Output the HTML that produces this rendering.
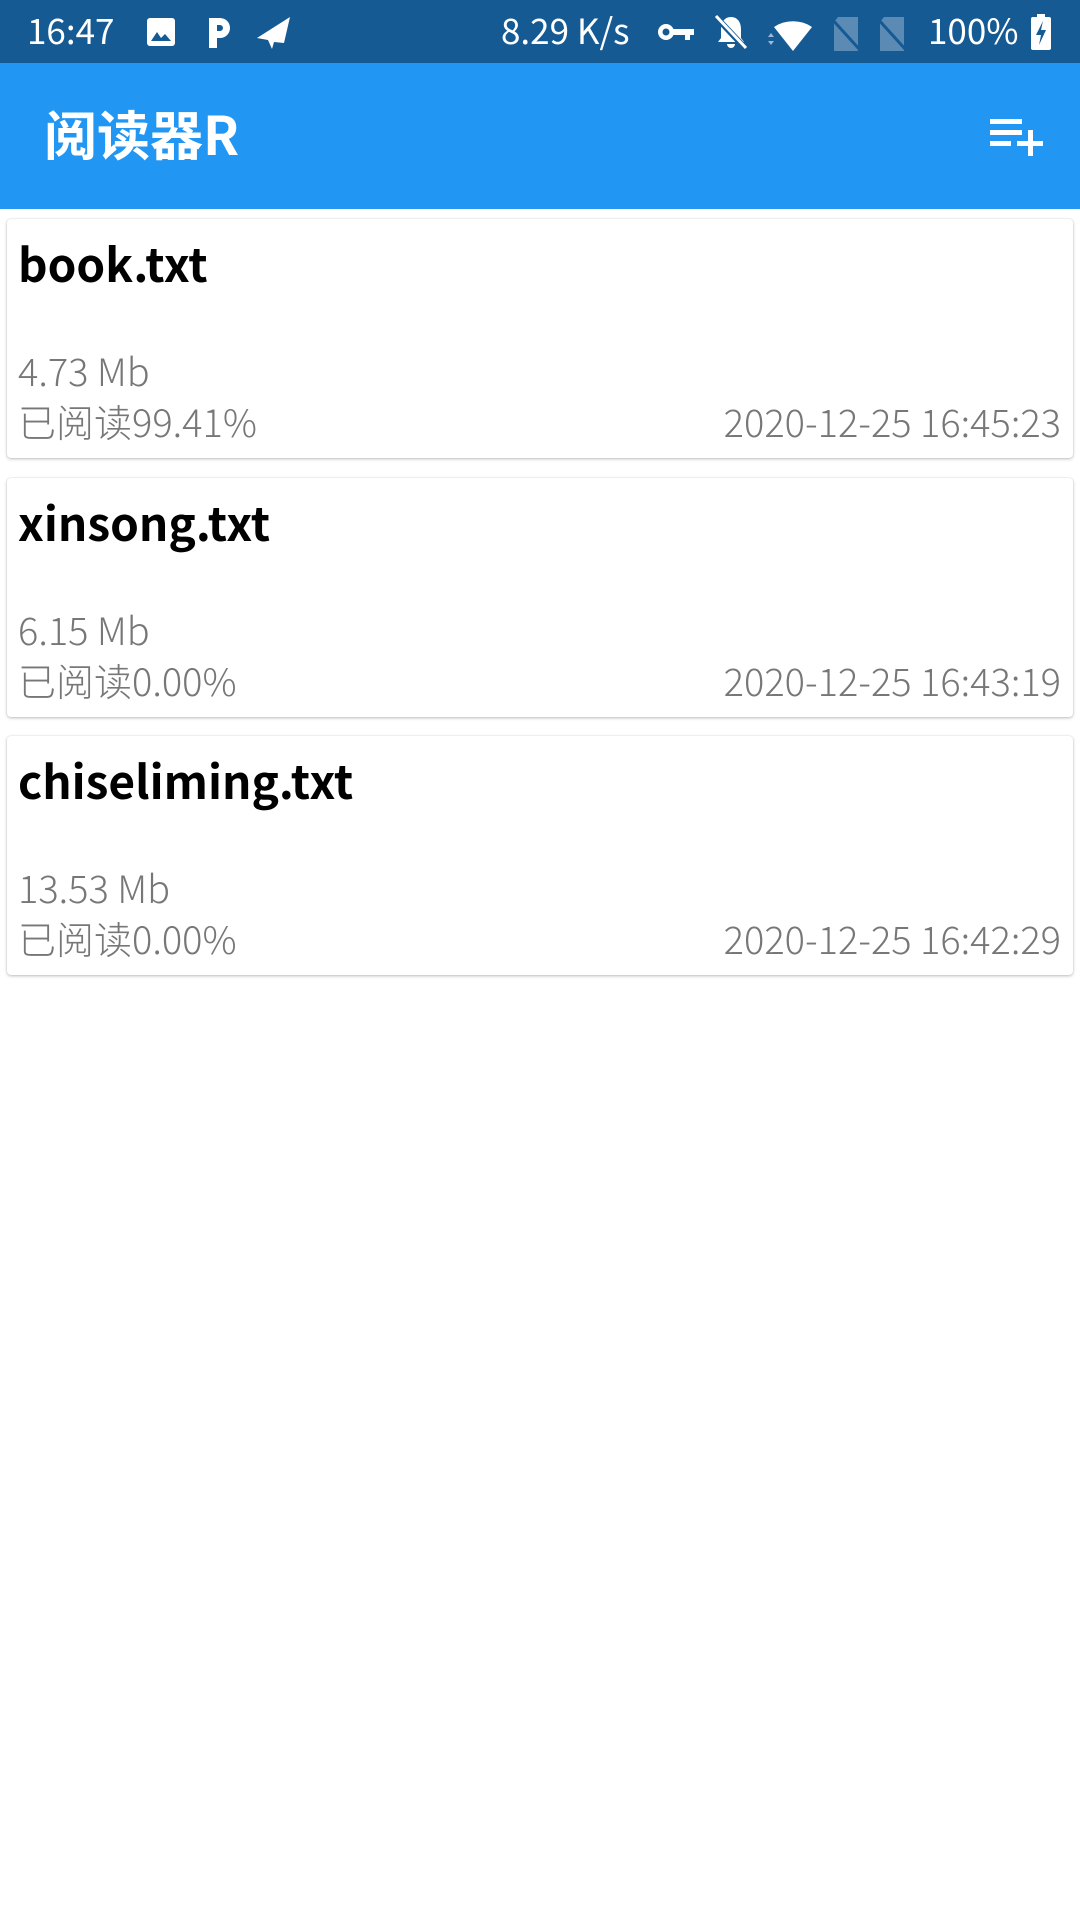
<!DOCTYPE html>
<html><head><meta charset="utf-8"><style>
*{margin:0;padding:0;box-sizing:border-box}
body{width:1080px;height:1920px;background:#fff;font-family:"Liberation Sans","Noto Sans CJK SC",sans-serif;position:relative;overflow:hidden}
.sb{position:absolute;left:0;top:0;width:1080px;height:63px;background:#165a94;color:#fff}
.sb .t{position:absolute;top:8px;font-size:35px;line-height:44px;font-family:"Noto Sans CJK SC","Liberation Sans",sans-serif}
.ab{position:absolute;left:0;top:63px;width:1080px;height:146px;background:#2196f3}
.ab h1{position:absolute;left:44px;top:38px;font-size:53px;line-height:64px;color:#fff;font-weight:bold;font-family:"Noto Sans CJK SC","Liberation Sans",sans-serif}
.card{position:absolute;left:7px;width:1066px;height:239px;background:#fff;border-radius:4px;box-shadow:0 1px 3px rgba(0,0,0,.25),0 0 1px rgba(0,0,0,.15)}
.card .n{position:absolute;left:11px;top:17px;font-size:46px;font-weight:bold;color:#000;font-family:"Noto Sans CJK SC","Liberation Sans",sans-serif;line-height:54px}
.card .s,.card .p,.card .d{position:absolute;font-size:38px;font-weight:300;color:#777;line-height:44px;font-family:"Noto Sans CJK SC","Liberation Sans",sans-serif}
.card .s{left:11px;top:129px}
.card .p{left:11px;top:180px}
.card .d{right:12px;top:180px}
</style></head><body>
<div class="sb">
<div class="t" style="left:27px">16:47</div>
<svg style="position:absolute;left:146px;top:17px" width="30" height="30" viewBox="0 0 30 30"><rect x="1" y="1" width="28" height="28" rx="3" fill="#fff"/><path d="M5 24 L11 15 L15 21 L19 17 L25 24Z" fill="#165a94"/></svg>
<svg style="position:absolute;left:206px;top:16px" width="26" height="34" viewBox="0 0 26 34"><path d="M3 2 H14 A10 10 0 0 1 14 22 H11 V32 H3Z M11 9 V15 H14 A3 3 0 0 0 14 9Z" fill="#fff" fill-rule="evenodd"/></svg>
<svg style="position:absolute;left:256px;top:16px" width="36" height="34" viewBox="0 0 36 34"><path d="M34 1 L1 22 L12 24 L16 33 L18 26 L28 27Z" fill="#fff"/></svg>
<div class="t" style="left:501px">8.29 K/s</div>
<svg style="position:absolute;left:657px;top:22px" width="38" height="20" viewBox="0 0 38 20"><circle cx="9" cy="10" r="8" fill="#fff"/><circle cx="9" cy="10" r="3.5" fill="#165a94"/><rect x="15" y="7" width="22" height="6" fill="#fff"/><rect x="28" y="12" width="5" height="6" fill="#fff"/></svg>
<svg style="position:absolute;left:713px;top:14px" width="36" height="36" viewBox="0 0 36 36"><path d="M18 3 C11 3 8 9 8 15 V24 L5 28 H31 L28 24 V15 C28 9 25 3 18 3Z M14 30 H22 A4 4 0 0 1 14 30Z" fill="#fff"/><path d="M3 3 L33 35" stroke="#165a94" stroke-width="6"/><path d="M3 2 L33 34" stroke="#fff" stroke-width="3"/></svg>
<svg style="position:absolute;left:764px;top:15px" width="52" height="38" viewBox="0 0 52 38"><path d="M10 12 A34 34 0 0 1 48 12 L29 36Z" fill="#fff"/><path d="M4 22 L7 18 L10 22Z M4 26 L10 26 L7 30Z" fill="#9cb8d4"/></svg>
<svg style="position:absolute;left:830px;top:16px" width="32" height="36" viewBox="0 0 32 36"><path d="M8 1 H28 V35 H4 V6Z" fill="#5b8ab5"/><path d="M1 2 L30 34" stroke="#165a94" stroke-width="3"/></svg>
<svg style="position:absolute;left:876px;top:16px" width="32" height="36" viewBox="0 0 32 36"><path d="M8 1 H28 V35 H4 V6Z" fill="#5b8ab5"/><path d="M1 2 L30 34" stroke="#165a94" stroke-width="3"/></svg>
<div class="t" style="left:928px">100%</div>
<svg style="position:absolute;left:1030px;top:14px" width="22" height="36" viewBox="0 0 22 36"><rect x="7" y="0" width="8" height="4" fill="#fff"/><rect x="1" y="3" width="20" height="33" rx="2" fill="#fff"/><path d="M13 7 L6 21 H11 L9 31 L16 16 H11Z" fill="#165a94"/></svg>
</div>
<div class="ab"><h1>阅读器R</h1>
<svg style="position:absolute;left:988px;top:54px" width="58" height="40" viewBox="0 0 58 40"><rect x="2" y="2" width="32" height="5" fill="#fff"/><rect x="2" y="13" width="32" height="5" fill="#fff"/><rect x="2" y="24" width="21" height="5" fill="#fff"/><rect x="29" y="24" width="26" height="5" fill="#fff"/><rect x="40" y="13" width="5" height="26" fill="#fff"/></svg>
</div>
<div class="card" style="top:219px"><div class="n">book.txt</div><div class="s">4.73 Mb</div><div class="p">已阅读99.41%</div><div class="d">2020-12-25 16:45:23</div></div>
<div class="card" style="top:478px"><div class="n">xinsong.txt</div><div class="s">6.15 Mb</div><div class="p">已阅读0.00%</div><div class="d">2020-12-25 16:43:19</div></div>
<div class="card" style="top:736px"><div class="n">chiseliming.txt</div><div class="s">13.53 Mb</div><div class="p">已阅读0.00%</div><div class="d">2020-12-25 16:42:29</div></div>
</body></html>
